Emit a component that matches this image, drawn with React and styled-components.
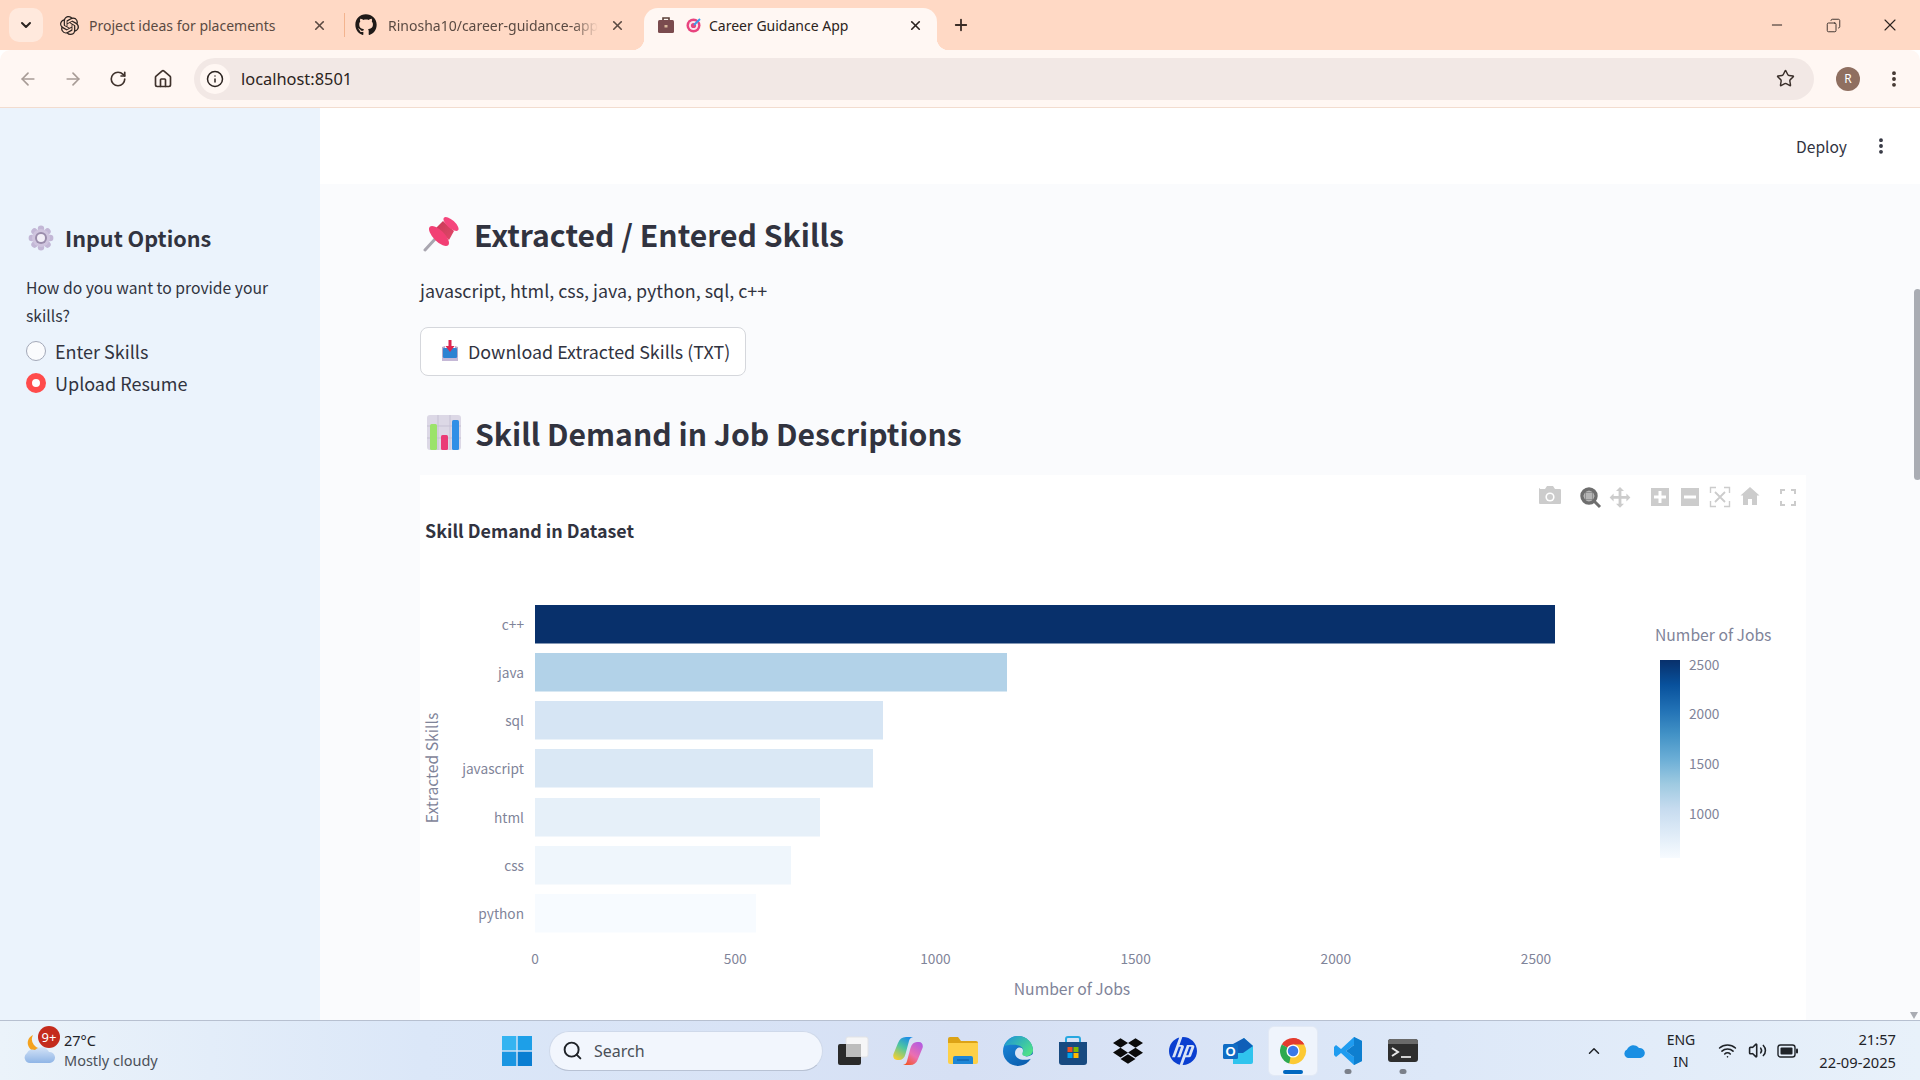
import React from 'react';
import styled, { createGlobalStyle } from 'styled-components';
import {
  ArrowLeft,
  ArrowRight,
  RotateCw,
  Home,
  Info,
  Star,
  EllipsisVertical,
  X,
  Plus,
  Minus,
  Search,
  ChevronDown,
  ChevronUp,
  Wifi,
  Volume2,
  Copy,
} from 'lucide-react';
import { FaGithub, FaDropbox } from 'react-icons/fa';
import { SiOpenai, SiHp } from 'react-icons/si';

const STREAMLIT_FONT = '"Noto Sans CJK SC", "Noto Sans", sans-serif';
const CHROME_FONT = '"Noto Sans", "Open Sans", sans-serif';

const GlobalStyle = createGlobalStyle`
  html, body {
    margin: 0;
    padding: 0;
    width: 1920px;
    height: 1080px;
    overflow: hidden;
    background: #fff;
  }
  * { box-sizing: border-box; }
`;

const Screen = styled.div`
  width: 1920px;
  height: 1080px;
  display: flex;
  flex-direction: column;
  font-family: ${STREAMLIT_FONT};
`;

/* browser chrome */
const TabStrip = styled.div`
  height: 50px;
  flex: none;
  background: #ffd9c5;
  display: flex;
  align-items: flex-end;
  padding-left: 9px;
  font-family: ${CHROME_FONT};
`;
const TabSearch = styled.div`
  width: 34px;
  height: 34px;
  align-self: flex-start;
  margin-top: 8px;
  margin-right: 13px;
  border-radius: 10px;
  background: #ffe9dd;
  color: #2b2320;
  display: flex;
  align-items: center;
  justify-content: center;
`;
const Tab = styled.div`
  position: relative;
  width: ${p => p.$width}px;
  height: 42px;
  display: flex;
  align-items: center;
  padding: 0 ${p => p.$right || 14}px 8px ${p => p.$pad}px;
  font-size: 14px;
  color: ${p => (p.$active ? '#2b2320' : '#5a4a42')};
  background: ${p => (p.$active ? '#fff7f3' : 'transparent')};
  border-radius: 14px 14px 0 0;
  ${p =>
    p.$active &&
    `
    &::before, &::after {
      content: '';
      position: absolute;
      bottom: 0;
      width: 12px;
      height: 12px;
    }
    &::before {
      left: -12px;
      background: radial-gradient(circle at 0 0, transparent 12px, #fff7f3 12.5px);
    }
    &::after {
      right: -12px;
      background: radial-gradient(circle at 100% 0, transparent 12px, #fff7f3 12.5px);
    }
  `}
`;
const TabTitle = styled.span`
  flex: 1;
  margin-left: ${p => p.$gap}px;
  white-space: nowrap;
  overflow: hidden;
  ${p =>
    p.$fade &&
    `
    mask-image: linear-gradient(90deg, #000 88%, transparent 100%);
  `}
`;
const TabDivider = styled.div`
  width: 1px;
  height: 24px;
  margin-bottom: 13px;
  background: #f3b48f;
`;
const NewTab = styled.div`
  margin-left: 15px;
  height: 42px;
  padding-bottom: 8px;
  display: flex;
  align-items: center;
  color: #3a2c26;
`;
const WindowControls = styled.div`
  margin-left: auto;
  height: 50px;
  padding-right: 1px;
  display: flex;
  align-items: center;
  color: #2b2320;
`;
const WindowButton = styled.div`
  width: ${p => p.$width || 56}px;
  display: flex;
  justify-content: center;
`;
const Toolbar = styled.div`
  height: 58px;
  flex: none;
  background: #fff7f3;
  border-bottom: 1px solid #f2dccf;
  border-radius: 10px 10px 0 0;
  display: flex;
  align-items: center;
  padding: 0 0 0 5px;
  font-family: ${CHROME_FONT};
  color: #5a4a42;
`;
const NavButton = styled.div`
  width: 45px;
  display: flex;
  justify-content: center;
  color: ${p => (p.$muted ? '#a89c96' : '#3f322c')};
`;
const Omnibox = styled.div`
  margin-left: 9px;
  width: 1620px;
  height: 42px;
  border-radius: 21px;
  background: #f2e8e5;
  display: flex;
  align-items: center;
  padding: 0 19px 0 6px;
`;
const InfoBadge = styled.div`
  width: 30px;
  height: 30px;
  border-radius: 50%;
  background: #fff7f3;
  color: #2b2320;
  display: flex;
  align-items: center;
  justify-content: center;
`;
const Url = styled.span`
  margin-left: 11px;
  flex: 1;
  font-size: 16.4px;
  color: #2b2320;
`;
const Avatar = styled.div`
  margin-left: 22px;
  width: 24px;
  height: 24px;
  border-radius: 50%;
  background: #8f6f60;
  color: #fff;
  font-size: 12px;
  display: flex;
  align-items: center;
  justify-content: center;
`;
const MenuDots = styled.div`
  margin-left: 24px;
  display: flex;
  color: ${p => p.$color || '#3f322c'};
`;

/* streamlit page */
const Page = styled.div`
  flex: 1;
  min-height: 0;
  display: flex;
  overflow: hidden;
`;
const Sidebar = styled.aside`
  width: 320px;
  flex: none;
  background: #ebf3fc;
  padding: 113px 26px 0;
  color: #31333f;
`;
const SidebarTitle = styled.div`
  display: flex;
  align-items: center;
  gap: 11px;
  margin-left: 2px;
  font-size: 21.6px;
  font-weight: 600;
  line-height: 34px;
`;
const RadioLabel = styled.div`
  margin-top: 19px;
  font-size: 15.7px;
  line-height: 28px;
  width: 260px;
`;
const RadioRow = styled.div`
  height: 32px;
  display: flex;
  align-items: center;
  gap: 9px;
  font-size: 18px;
`;
const RadioDot = styled.span`
  width: 20px;
  height: 20px;
  border-radius: 50%;
  flex: none;
  ${p =>
    p.$checked
      ? 'background: #fff; border: 6px solid #ff4b4b;'
      : 'background: #fafbfd; border: 1px solid #a3a8b8;'}
`;
const RadioGroup = styled.div`
  margin-top: 5px;
  display: flex;
  flex-direction: column;
`;
const Main = styled.main`
  flex: 1;
  min-width: 0;
  background: #fafbfd;
  display: flex;
  flex-direction: column;
`;
const AppHeader = styled.div`
  height: 76px;
  flex: none;
  background: #fff;
  display: flex;
  align-items: center;
  justify-content: flex-end;
  padding: 0 29px 0 0;
  color: #31333f;
  font-size: 15.6px;
`;
const Body = styled.div`
  flex: 1;
  min-height: 0;
  display: flex;
`;
const Content = styled.div`
  width: 1584px;
  flex: none;
  padding: 26px 0 0 100px;
  color: #31333f;
  overflow: hidden;
`;
const Heading = styled.h2`
  margin: ${p => p.$top}px 0 0;
  height: 48px;
  display: flex;
  align-items: center;
  gap: ${p => p.$gap}px;
  font-size: 30.15px;
  font-weight: 600;
  line-height: 48px;
`;
const SkillsLine = styled.p`
  margin: 17px 0 0;
  font-size: 17.9px;
  line-height: 30px;
`;
const DownloadButton = styled.button`
  margin-top: 22px;
  width: 326px;
  height: 49px;
  display: flex;
  align-items: center;
  gap: 9px;
  padding: 0 0 2px 20px;
  background: #fff;
  border: 1px solid #d5d7dc;
  border-radius: 8px;
  color: #31333f;
  font-family: ${STREAMLIT_FONT};
  font-size: 17.9px;
  white-space: nowrap;
`;
const ChartCard = styled.div`
  margin-top: 18px;
  width: 1386px;
  height: 560px;
  background: #fff;
`;
const ChartTitle = styled.text`
  font-size: 17.9px;
  font-weight: 700;
  fill: #31333f;
`;
const AxisText = styled.text`
  font-size: ${p => p.$size || 13.7}px;
  fill: #7f8499;
`;
const Scrollbar = styled.div`
  flex: 1;
  position: relative;
`;
const ScrollThumb = styled.div`
  width: 7px;
  height: 191px;
  margin: 105px 0 0 10px;
  border-radius: 4px;
  background: #a9acb3;
`;
const ScrollArrow = styled.div`
  position: absolute;
  bottom: 1px;
  right: 3px;
  width: 0;
  height: 0;
  border-left: 4px solid transparent;
  border-right: 4px solid transparent;
  border-top: 7px solid #a9acb3;
`;

/* windows taskbar */
const Taskbar = styled.div`
  height: 60px;
  flex: none;
  border-top: 1px solid #b7c0d0;
  background: linear-gradient(90deg, #ebf3fa 0%, #dbe7f8 22%, #d6e0f4 50%, #dde8f8 75%, #e8f1fa 100%);
  display: flex;
  align-items: center;
  font-family: ${CHROME_FONT};
  color: #1f2328;
  position: relative;
`;
const Weather = styled.div`
  width: 502px;
  flex: none;
  display: flex;
  align-items: center;
  padding: 0 0 2px 24px;
  position: relative;
`;
const WeatherText = styled.div`
  margin-left: 8px;
  font-size: 14.5px;
  line-height: 20px;
`;
const WeatherSub = styled.div`
  color: #4b5058;
`;
const Badge = styled.span`
  position: absolute;
  left: 38px;
  top: -4px;
  width: 22px;
  height: 22px;
  border-radius: 50%;
  background: #c42b1c;
  color: #fff;
  font-size: 13px;
  line-height: 22px;
  text-align: center;
`;
const SearchBox = styled.div`
  margin-left: 17px;
  width: 274px;
  height: 40px;
  border-radius: 20px;
  background: #f2f6fd;
  border: 1px solid #cfd9ea;
  border-bottom-color: #b8c2d4;
  display: flex;
  align-items: center;
  gap: 11px;
  padding-left: 12px;
  font-size: 16px;
  color: #4b5058;
`;
const TaskIcons = styled.div`
  margin-left: 2px;
  display: flex;
  align-items: center;
`;
const TaskIcon = styled.div`
  width: 55px;
  height: 48px;
  position: relative;
  display: flex;
  align-items: center;
  justify-content: center;
  &::after {
    content: '';
    display: ${p => (p.$dot || p.$active ? 'block' : 'none')};
    position: absolute;
    bottom: 1px;
    left: 50%;
    transform: translateX(-50%);
    width: ${p => (p.$active ? '20px' : '7px')};
    height: ${p => (p.$active ? '4px' : '5px')};
    border-radius: 3px;
    background: ${p => (p.$active ? '#0067c0' : '#7b808a')};
  }
  ${p =>
    p.$active &&
    `
    background: #eff4fc;
    border-radius: 5px;
    box-shadow: 0 0 0 1px #e2e9f5;
    width: 48px;
    margin: 0 3.5px;
  `}
`;
const Tray = styled.div`
  margin-left: auto;
  display: flex;
  align-items: center;
  padding-right: 24px;
`;
const TrayItem = styled.div`
  width: ${p => p.$width}px;
  display: flex;
  justify-content: center;
`;
const Lang = styled.div`
  width: 58px;
  text-align: center;
  font-size: 14px;
  line-height: 22px;
`;
const Clock = styled.div`
  width: 90px;
  text-align: right;
  font-size: 14.7px;
  line-height: 23px;
  white-space: nowrap;
`;

/* drawings */
const ChromeLogo = ({ size = 30 }) => (
  <svg width={size} height={size} viewBox="0 0 32 32">
    <path d="M16 16 L4 9 A14 14 0 0 1 28 9 Z" fill="#e33b2e" />
    <path d="M16 2 A14 14 0 0 1 28 9 L16 9 Z" fill="#e33b2e" />
    <path d="M4 9 A14 14 0 0 0 12 29.4 L19 17 Z" fill="#2da94f" />
    <path d="M28 9 H16 L12 29.4 A14 14 0 0 0 28 9 Z" fill="#fcc934" />
    <circle cx="16" cy="16" r="7" fill="#fff" />
    <circle cx="16" cy="16" r="5.6" fill="#3b78e7" />
  </svg>
);

const GearEmoji = () => (
  <svg width="26" height="26" viewBox="0 0 26 26">
    <g fill="#c3b7d6">
      {[0, 45, 90, 135, 180, 225, 270, 315].map(a => (
        <circle key={a} cx="13" cy="3.8" r="3.2" transform={`rotate(${a} 13 13)`} />
      ))}
    </g>
    <circle cx="13" cy="13" r="9" fill="#cfc4de" />
    <circle cx="13" cy="13" r="6" fill="#9a8cab" />
    <circle cx="13" cy="13" r="4" fill="#f2eef7" />
  </svg>
);

const PinEmoji = () => (
  <svg width="40" height="36" viewBox="0 0 40 36" style={{ flex: 'none' }}>
    <defs>
      <linearGradient id="pinNeck" x1="0" y1="0" x2="1" y2="1">
        <stop offset="0" stopColor="#c93a56" />
        <stop offset="1" stopColor="#e0476a" />
      </linearGradient>
    </defs>
    <path d="M5 34 L16 22" stroke="#a9a6b0" strokeWidth="3" strokeLinecap="round" />
    <path d="M23 5 L34 15 L29 24 L16 12 Z" fill="url(#pinNeck)" />
    <ellipse cx="19" cy="20" rx="13" ry="5.5" transform="rotate(45 19 20)" fill="#f23f74" />
    <ellipse cx="31" cy="8" rx="9.5" ry="4" transform="rotate(42 31 8)" fill="#f5457c" />
  </svg>
);

const ChartEmoji = () => (
  <svg width="36" height="36" viewBox="0 0 36 36" style={{ flex: 'none' }}>
    <rect x="1" y="0" width="34" height="35" rx="3" fill="#dcd8e6" />
    <path d="M1 11 H35 M1 23 H35 M12 0 V35 M24 0 V35" stroke="#c6c1d4" strokeWidth="1" />
    <rect x="4" y="9" width="7" height="26" rx="1.5" fill="#9be36a" />
    <rect x="15" y="20" width="7" height="15" rx="1.5" fill="#ea3a76" />
    <rect x="26" y="5" width="7" height="30" rx="1.5" fill="#2f8fe6" />
  </svg>
);

const InboxEmoji = () => (
  <svg width="18" height="22" viewBox="0 0 18 22" style={{ flex: 'none' }}>
    <path d="M1 17 H17 V21 H1 Z" fill="#c5b8d6" />
    <path d="M1 7 L4 6 V17 H1 Z M17 7 L14 6 V17 H17 Z" fill="#b5a8c8" />
    <rect x="2" y="8" width="14" height="10" rx="1" fill="#2d83d2" />
    <path d="M7.5 0 H10.5 V6 H13.5 L9 12 L4.5 6 H7.5 Z" fill="#dd2650" />
  </svg>
);

const Briefcase = () => (
  <svg width="18" height="18" viewBox="0 0 18 18" style={{ flex: 'none' }}>
    <path d="M6 4 V2 H12 V4" fill="none" stroke="#5c4038" strokeWidth="1.6" />
    <rect x="1" y="4" width="16" height="13" rx="1.5" fill="#7a4b4e" />
    <rect x="7.5" y="9" width="3" height="2.5" fill="#d9b99b" />
  </svg>
);

const TargetIcon = () => (
  <svg width="16" height="16" viewBox="0 0 16 16" style={{ marginLeft: 11, flex: 'none' }}>
    <circle cx="7.5" cy="8.5" r="7" fill="#e8437e" />
    <circle cx="7.5" cy="8.5" r="4.6" fill="#fbe3ec" />
    <circle cx="7.5" cy="8.5" r="2.6" fill="#e8437e" />
    <path d="M8 8 L14 2" stroke="#3d9be9" strokeWidth="2" />
  </svg>
);

const WeatherIcon = () => (
  <svg width="32" height="32" viewBox="0 0 32 32" style={{ flex: 'none' }}>
    <defs>
      <linearGradient id="cloudFill" x1="0" y1="0" x2="0" y2="1">
        <stop offset="0" stopColor="#d4e3f7" />
        <stop offset="1" stopColor="#8fb5e6" />
      </linearGradient>
    </defs>
    <path d="M9 1 A8.5 8.5 0 1 0 19 14 A9 9 0 0 1 9 1 Z" fill="#f4a21f" />
    <path d="M6 29 A5.5 5.5 0 0 1 3 19 A6 6 0 0 1 11 16 A8.5 8.5 0 0 1 25 18 A5.5 5.5 0 0 1 26 29 Z" fill="url(#cloudFill)" />
  </svg>
);

const WindowsLogo = () => (
  <svg width="30" height="30" viewBox="0 0 30 30">
    <rect x="0" y="0" width="14.3" height="14.3" fill="#35b4f1" />
    <rect x="15.7" y="0" width="14.3" height="14.3" fill="#1d9fe8" />
    <rect x="0" y="15.7" width="14.3" height="14.3" fill="#1a96e2" />
    <rect x="15.7" y="15.7" width="14.3" height="14.3" fill="#0a7ed2" />
  </svg>
);

const TaskView = () => (
  <svg width="32" height="30" viewBox="0 0 32 30">
    <rect x="9" y="1" width="22" height="20" rx="2" fill="#f6f6f7" stroke="#e2e3e6" />
    <rect x="1" y="8" width="23" height="21" rx="2" fill="#2a2a2a" />
    <rect x="9" y="8" width="15" height="13" fill="#bdbdbd" />
  </svg>
);

const Copilot = () => (
  <svg width="30" height="28" viewBox="0 0 30 28">
    <defs>
      <linearGradient id="copA" x1="0.7" y1="0" x2="0.2" y2="1">
        <stop offset="0" stopColor="#1d8ee6" />
        <stop offset="0.45" stopColor="#4fc6a0" />
        <stop offset="1" stopColor="#f5cf2f" />
      </linearGradient>
      <linearGradient id="copB" x1="0.8" y1="0" x2="0.2" y2="1">
        <stop offset="0" stopColor="#b45ce0" />
        <stop offset="0.55" stopColor="#ec6fb0" />
        <stop offset="1" stopColor="#f2572b" />
      </linearGradient>
    </defs>
    <path d="M13 0 H20 C17 1 16.5 2 16 4 L12.5 17 C11.5 21 9 23 6 23 H4 C1 23 -0.5 20 0.5 17 L5 6 C6.5 2 9 0 13 0 Z" fill="url(#copA)" />
    <path d="M17 28 H10 C13 27 13.5 26 14 24 L17.5 11 C18.5 7 21 5 24 5 H26 C29 5 30.5 8 29.5 11 L25 22 C23.5 26 21 28 17 28 Z" fill="url(#copB)" />
  </svg>
);

const FolderIcon = () => (
  <svg width="30" height="27" viewBox="0 0 30 27">
    <path d="M0 2 A2 2 0 0 1 2 0 H10 L13 4 H28 A2 2 0 0 1 30 6 V12 H0 Z" fill="#dca316" />
    <path d="M0 6 H30 V25 A2 2 0 0 1 28 27 H2 A2 2 0 0 1 0 25 Z" fill="#fdd048" />
    <path d="M5 27 V21 A2 2 0 0 1 7 19 H23 A2 2 0 0 1 25 21 V27 Z" fill="#1d86d6" />
    <path d="M9 23 H21" stroke="#0d5fa8" strokeWidth="1.2" />
  </svg>
);

const EdgeIcon = () => (
  <svg width="30" height="30" viewBox="0 0 30 30">
    <defs>
      <linearGradient id="edgeA" x1="0" y1="0" x2="1" y2="0.7">
        <stop offset="0" stopColor="#1a8fdc" />
        <stop offset="1" stopColor="#4fe08a" />
      </linearGradient>
      <linearGradient id="edgeB" x1="0" y1="0" x2="0.6" y2="1">
        <stop offset="0" stopColor="#1d8ee0" />
        <stop offset="1" stopColor="#0b5fb0" />
      </linearGradient>
    </defs>
    <circle cx="15" cy="15" r="15" fill="url(#edgeB)" />
    <path d="M12 17 C12 11 19 10 20 14 C20 17 19 19 22 20 C24 21 27 20 30 18 L30 22 C25 25 12 25 12 17 Z" fill="#d8e3f5" />
    <path d="M1 10 C4 3 10 0 15 0 C24 0 30 7 30 14 C30 18 26 21 22 20 C19 19.5 19 18 19.5 17 C21 14 20 11 16 9.5 C11 8 4 9 1 10 Z" fill="url(#edgeA)" />
  </svg>
);

const StoreIcon = () => (
  <svg width="30" height="30" viewBox="0 0 30 30">
    <path d="M8 6 V3 A2 2 0 0 1 10 1 H20 A2 2 0 0 1 22 3 V6" fill="none" stroke="#29a8e0" strokeWidth="2" />
    <path d="M1 6 H29 V26 A3 3 0 0 1 26 29 H4 A3 3 0 0 1 1 26 Z" fill="#184a80" />
    <rect x="9.5" y="11" width="5" height="5" fill="#f25022" />
    <rect x="15.5" y="11" width="5" height="5" fill="#7fba00" />
    <rect x="9.5" y="17" width="5" height="5" fill="#00a4ef" />
    <rect x="15.5" y="17" width="5" height="5" fill="#ffb900" />
  </svg>
);

const OutlookIcon = () => (
  <svg width="30" height="26" viewBox="0 0 30 26">
    <path d="M10 8 L21 0 L30 8 V24 A2 2 0 0 1 28 26 H10 Z" fill="#30c4ee" />
    <path d="M10 6 L21 0 L30 8 L20 15 L10 15 Z" fill="#0f5fb8" />
    <rect x="0" y="6" width="15" height="15" rx="1.5" fill="#0f6cc4" />
    <text x="7.5" y="18" textAnchor="middle" fontSize="13" fontWeight="700" fill="#fff" fontFamily="Liberation Sans, sans-serif">O</text>
  </svg>
);

const VsCodeIcon = () => (
  <svg width="30" height="30" viewBox="0 0 30 30">
    <path d="M21 1 L29 5 V25 L21 29 L8 17 L3 21 L1 19 V11 L3 9 L8 13 Z M21 9 L13 15 L21 21 Z" fill="#1f9cf0" />
    <path d="M21 1 L29 5 V25 L21 29 Z M21 9 L21 21 L13 15 Z" fill="#0e7fd0" fillRule="evenodd" />
  </svg>
);

const TerminalIcon = () => (
  <svg width="30" height="23" viewBox="0 0 30 23">
    <rect x="0" y="0" width="30" height="23" rx="3" fill="#2e2e2e" />
    <path d="M3 0 H27 A3 3 0 0 1 30 3 V5 H0 V3 A3 3 0 0 1 3 0 Z" fill="#6a6a6a" />
    <path d="M4 9 L10 13 L4 17" fill="none" stroke="#e8e8e8" strokeWidth="2" />
    <path d="M13 18 H23" stroke="#cfcfcf" strokeWidth="2" />
  </svg>
);

const OneDrive = () => (
  <svg width="22" height="16" viewBox="0 0 22 16">
    <path d="M5 15 A4.5 4.5 0 0 1 4 6.5 A7 7 0 0 1 16 5 A5 5 0 0 1 17.5 15 Z" fill="#1a8fe3" />
  </svg>
);

const Battery = () => (
  <svg width="22" height="16" viewBox="0 0 22 16">
    <rect x="1" y="2" width="17" height="12" rx="2.5" fill="none" stroke="#1f2328" strokeWidth="1.4" />
    <rect x="3.5" y="4.5" width="12" height="7" rx="1" fill="#1f2328" />
    <rect x="19" y="5.5" width="2" height="5" rx="1" fill="#1f2328" />
  </svg>
);

/* plotly modebar */
const ModeBar = () => (
  <g fill="#cccccc" transform="translate(0 1)">
    <path d="M1120 13 h5 l2 -3 h6 l2 3 h5 a1.5 1.5 0 0 1 1 1 v13 a1 1 0 0 1 -1 1 h-20 a1 1 0 0 1 -1 -1 v-14 a1 1 0 0 1 1 -1 z" />
    <circle cx="1130" cy="21" r="4.6" fill="#fff" />
    <circle cx="1130" cy="21" r="3" />
    <circle cx="1169" cy="20" r="7" fill="none" stroke="#6e6e6e" strokeWidth="3.4" />
    <rect x="1165" y="16" width="8" height="8" fill="#b5b5b5" stroke="#6e6e6e" strokeWidth="1" />
    <path d="M1174 25 L1180 31" stroke="#6e6e6e" strokeWidth="3" />
    <path d="M1200 11 l4 4 h-2.6 v5 h5 v-2.6 l4 4 -4 4 v-2.6 h-5 v5 h2.6 l-4 4 -4 -4 h2.6 v-5 h-5 v2.6 l-4 -4 4 -4 v2.6 h5 v-5 h-2.6 z" />
    <path fillRule="evenodd" d="M1231 12 h18 v18 h-18 z M1238.5 15 v4.5 h-4.5 v3 h4.5 v4.5 h3 v-4.5 h4.5 v-3 h-4.5 v-4.5 z" />
    <path fillRule="evenodd" d="M1261 12 h18 v18 h-18 z M1264 19.5 v3 h12 v-3 z" />
    <g fill="none" stroke="#cccccc" strokeWidth="1.4">
      <path d="M1290.5 17 v-5.5 h5.5 M1304 11.5 h5.5 v5.5 M1309.5 25 v5.5 h-5.5 M1296 30.5 h-5.5 v-5.5" />
      <path d="M1295 16 L1305 26 M1305 16 L1295 26" strokeWidth="1.8" />
    </g>
    <path d="M1330 11 l9.5 8.5 h-2.5 v9.5 h-5 v-6 h-4 v6 h-5 v-9.5 h-2.5 z" />
    <g fill="none" stroke="#cccccc" strokeWidth="2">
      <path d="M1361 18 v-4 h4 M1371 14 h4 v4 M1375 25 v4 h-4 M1365 29 h-4 v-4" />
    </g>
  </g>
);

const PLOT_LEFT = 115;
const X_SCALE = 0.4004;
const bars = [
  { name: 'c++', y: 130, width: 1020, color: '#08306b' },
  { name: 'java', y: 178, width: 472, color: '#b2d2e8' },
  { name: 'sql', y: 226, width: 348, color: '#d6e5f4' },
  { name: 'javascript', y: 274, width: 338, color: '#dae8f5' },
  { name: 'html', y: 323, width: 285, color: '#e6f0f9' },
  { name: 'css', y: 371, width: 256, color: '#eff6fc' },
  { name: 'python', y: 419, width: 221, color: '#f7fbff' },
];
const xTicks = [0, 500, 1000, 1500, 2000, 2500];
const legendTicks = [
  { label: '2500', y: 190 },
  { label: '2000', y: 239 },
  { label: '1500', y: 289 },
  { label: '1000', y: 339 },
];

const SkillChart = () => (
  <ChartCard>
    <svg width="1386" height="560" style={{ display: 'block' }}>
      <defs>
        <linearGradient id="blues" x1="0" y1="0" x2="0" y2="1">
          <stop offset="0" stopColor="#08306b" />
          <stop offset="0.125" stopColor="#08519c" />
          <stop offset="0.25" stopColor="#2171b5" />
          <stop offset="0.375" stopColor="#4292c6" />
          <stop offset="0.5" stopColor="#6baed6" />
          <stop offset="0.625" stopColor="#9ecae1" />
          <stop offset="0.75" stopColor="#c6dbef" />
          <stop offset="0.875" stopColor="#deebf7" />
          <stop offset="1" stopColor="#f7fbff" />
        </linearGradient>
      </defs>
      <ModeBar />
      <ChartTitle x="5" y="63">Skill Demand in Dataset</ChartTitle>
      {bars.map(b => (
        <g key={b.name}>
          <rect x={PLOT_LEFT} y={b.y} width={b.width} height={38.5} fill={b.color} />
          <AxisText x={PLOT_LEFT - 11} y={b.y + 25} textAnchor="end">{b.name}</AxisText>
        </g>
      ))}
      {xTicks.map(t => (
        <AxisText key={t} x={PLOT_LEFT + t * X_SCALE} y={489} textAnchor="middle">{t}</AxisText>
      ))}
      <AxisText x={652} y={520} textAnchor="middle" $size={15.7}>Number of Jobs</AxisText>
      <AxisText transform="translate(18 293) rotate(-90)" textAnchor="middle" $size={15.7}>Extracted Skills</AxisText>
      <AxisText x={1235} y={166} $size={15.7}>Number of Jobs</AxisText>
      <rect x="1240" y="185" width="20" height="198" fill="url(#blues)" />
      {legendTicks.map(t => (
        <AxisText key={t.label} x={1269} y={t.y + 5}>{t.label}</AxisText>
      ))}
    </svg>
  </ChartCard>
);

const taskApps = [
  { key: 'view', icon: <TaskView /> },
  { key: 'copilot', icon: <Copilot /> },
  { key: 'files', icon: <FolderIcon /> },
  { key: 'edge', icon: <EdgeIcon /> },
  { key: 'store', icon: <StoreIcon /> },
  { key: 'dropbox', icon: <FaDropbox size={30} color="#0b0b0b" /> },
  { key: 'hp', icon: <SiHp size={28} color="#0a3fd0" /> },
  { key: 'outlook', icon: <OutlookIcon /> },
  { key: 'chrome', icon: <ChromeLogo />, active: true },
  { key: 'vscode', icon: <VsCodeIcon />, dot: true },
  { key: 'terminal', icon: <TerminalIcon />, dot: true },
];

export default function App() {
  return (
    <Screen>
      <GlobalStyle />
      <TabStrip>
        <TabSearch><ChevronDown size={16} strokeWidth={3} /></TabSearch>
        <Tab $width={288} $pad={4} $right={17}>
          <SiOpenai size={19} color="#2b2320" style={{ flex: 'none' }} />
          <TabTitle $gap={10}>Project ideas for placements</TabTitle>
          <X size={15} strokeWidth={2.6} />
        </Tab>
        <TabDivider />
        <Tab $width={287} $pad={10} $right={7}>
          <FaGithub size={22} color="#1f1a18" style={{ flex: 'none' }} />
          <TabTitle $gap={11} $fade>Rinosha10/career-guidance-app</TabTitle>
          <X size={15} strokeWidth={2.6} style={{ marginLeft: 12 }} />
        </Tab>
        <Tab $width={293} $pad={13} $active style={{ marginLeft: 12 }}>
          <Briefcase />
          <TargetIcon />
          <TabTitle $gap={7}>Career Guidance App</TabTitle>
          <X size={15} strokeWidth={2.6} />
        </Tab>
        <NewTab><Plus size={18} strokeWidth={2.4} /></NewTab>
        <WindowControls>
          <WindowButton><Minus size={16} strokeWidth={1.5} /></WindowButton>
          <WindowButton><Copy size={15} strokeWidth={1.4} style={{ transform: 'scaleX(-1)' }} /></WindowButton>
          <WindowButton $width={58}><X size={20} strokeWidth={1.3} /></WindowButton>
        </WindowControls>
      </TabStrip>
      <Toolbar>
        <NavButton $muted><ArrowLeft size={20} /></NavButton>
        <NavButton $muted><ArrowRight size={20} /></NavButton>
        <NavButton><RotateCw size={18} strokeWidth={2.2} /></NavButton>
        <NavButton><Home size={20} /></NavButton>
        <Omnibox>
          <InfoBadge><Info size={18} /></InfoBadge>
          <Url>localhost:8501</Url>
          <Star size={19} strokeWidth={1.8} color="#3a2f2a" />
        </Omnibox>
        <Avatar>R</Avatar>
        <MenuDots><EllipsisVertical size={20} strokeWidth={2.6} /></MenuDots>
      </Toolbar>
      <Page>
        <Sidebar>
          <SidebarTitle><GearEmoji />Input Options</SidebarTitle>
          <RadioLabel>How do you want to provide your skills?</RadioLabel>
          <RadioGroup>
            <RadioRow><RadioDot />Enter Skills</RadioRow>
            <RadioRow><RadioDot $checked />Upload Resume</RadioRow>
          </RadioGroup>
        </Sidebar>
        <Main>
          <AppHeader>
            Deploy
            <MenuDots $color="#31333f"><EllipsisVertical size={20} strokeWidth={2.6} /></MenuDots>
          </AppHeader>
          <Body>
            <Content>
              <Heading $top={0} $gap={14}><PinEmoji />Extracted / Entered Skills</Heading>
              <SkillsLine>javascript, html, css, java, python, sql, c++</SkillsLine>
              <DownloadButton><InboxEmoji />Download Extracted Skills (TXT)</DownloadButton>
              <Heading $top={33} $gap={13}><span style={{ marginLeft: 6, display: 'flex' }}><ChartEmoji /></span>Skill Demand in Job Descriptions</Heading>
              <SkillChart />
            </Content>
            <Scrollbar>
              <ScrollThumb />
              <ScrollArrow />
            </Scrollbar>
          </Body>
        </Main>
      </Page>
      <Taskbar>
        <Weather>
          <WeatherIcon />
          <Badge>9+</Badge>
          <WeatherText>
            27°C
            <WeatherSub>Mostly cloudy</WeatherSub>
          </WeatherText>
        </Weather>
        <WindowsLogo />
        <SearchBox><Search size={21} strokeWidth={2.2} color="#1f2328" />Search</SearchBox>
        <TaskIcons>
          {taskApps.map(a => (
            <TaskIcon key={a.key} $active={a.active} $dot={a.dot}>{a.icon}</TaskIcon>
          ))}
        </TaskIcons>
        <Tray>
          <TrayItem $width={44}><ChevronUp size={18} /></TrayItem>
          <TrayItem $width={36}><OneDrive /></TrayItem>
          <Lang>ENG<br />IN</Lang>
          <TrayItem $width={34}><Wifi size={19} /></TrayItem>
          <TrayItem $width={26}><Volume2 size={19} /></TrayItem>
          <TrayItem $width={36}><Battery /></TrayItem>
          <Clock>21:57<br />22-09-2025</Clock>
        </Tray>
      </Taskbar>
    </Screen>
  );
}
